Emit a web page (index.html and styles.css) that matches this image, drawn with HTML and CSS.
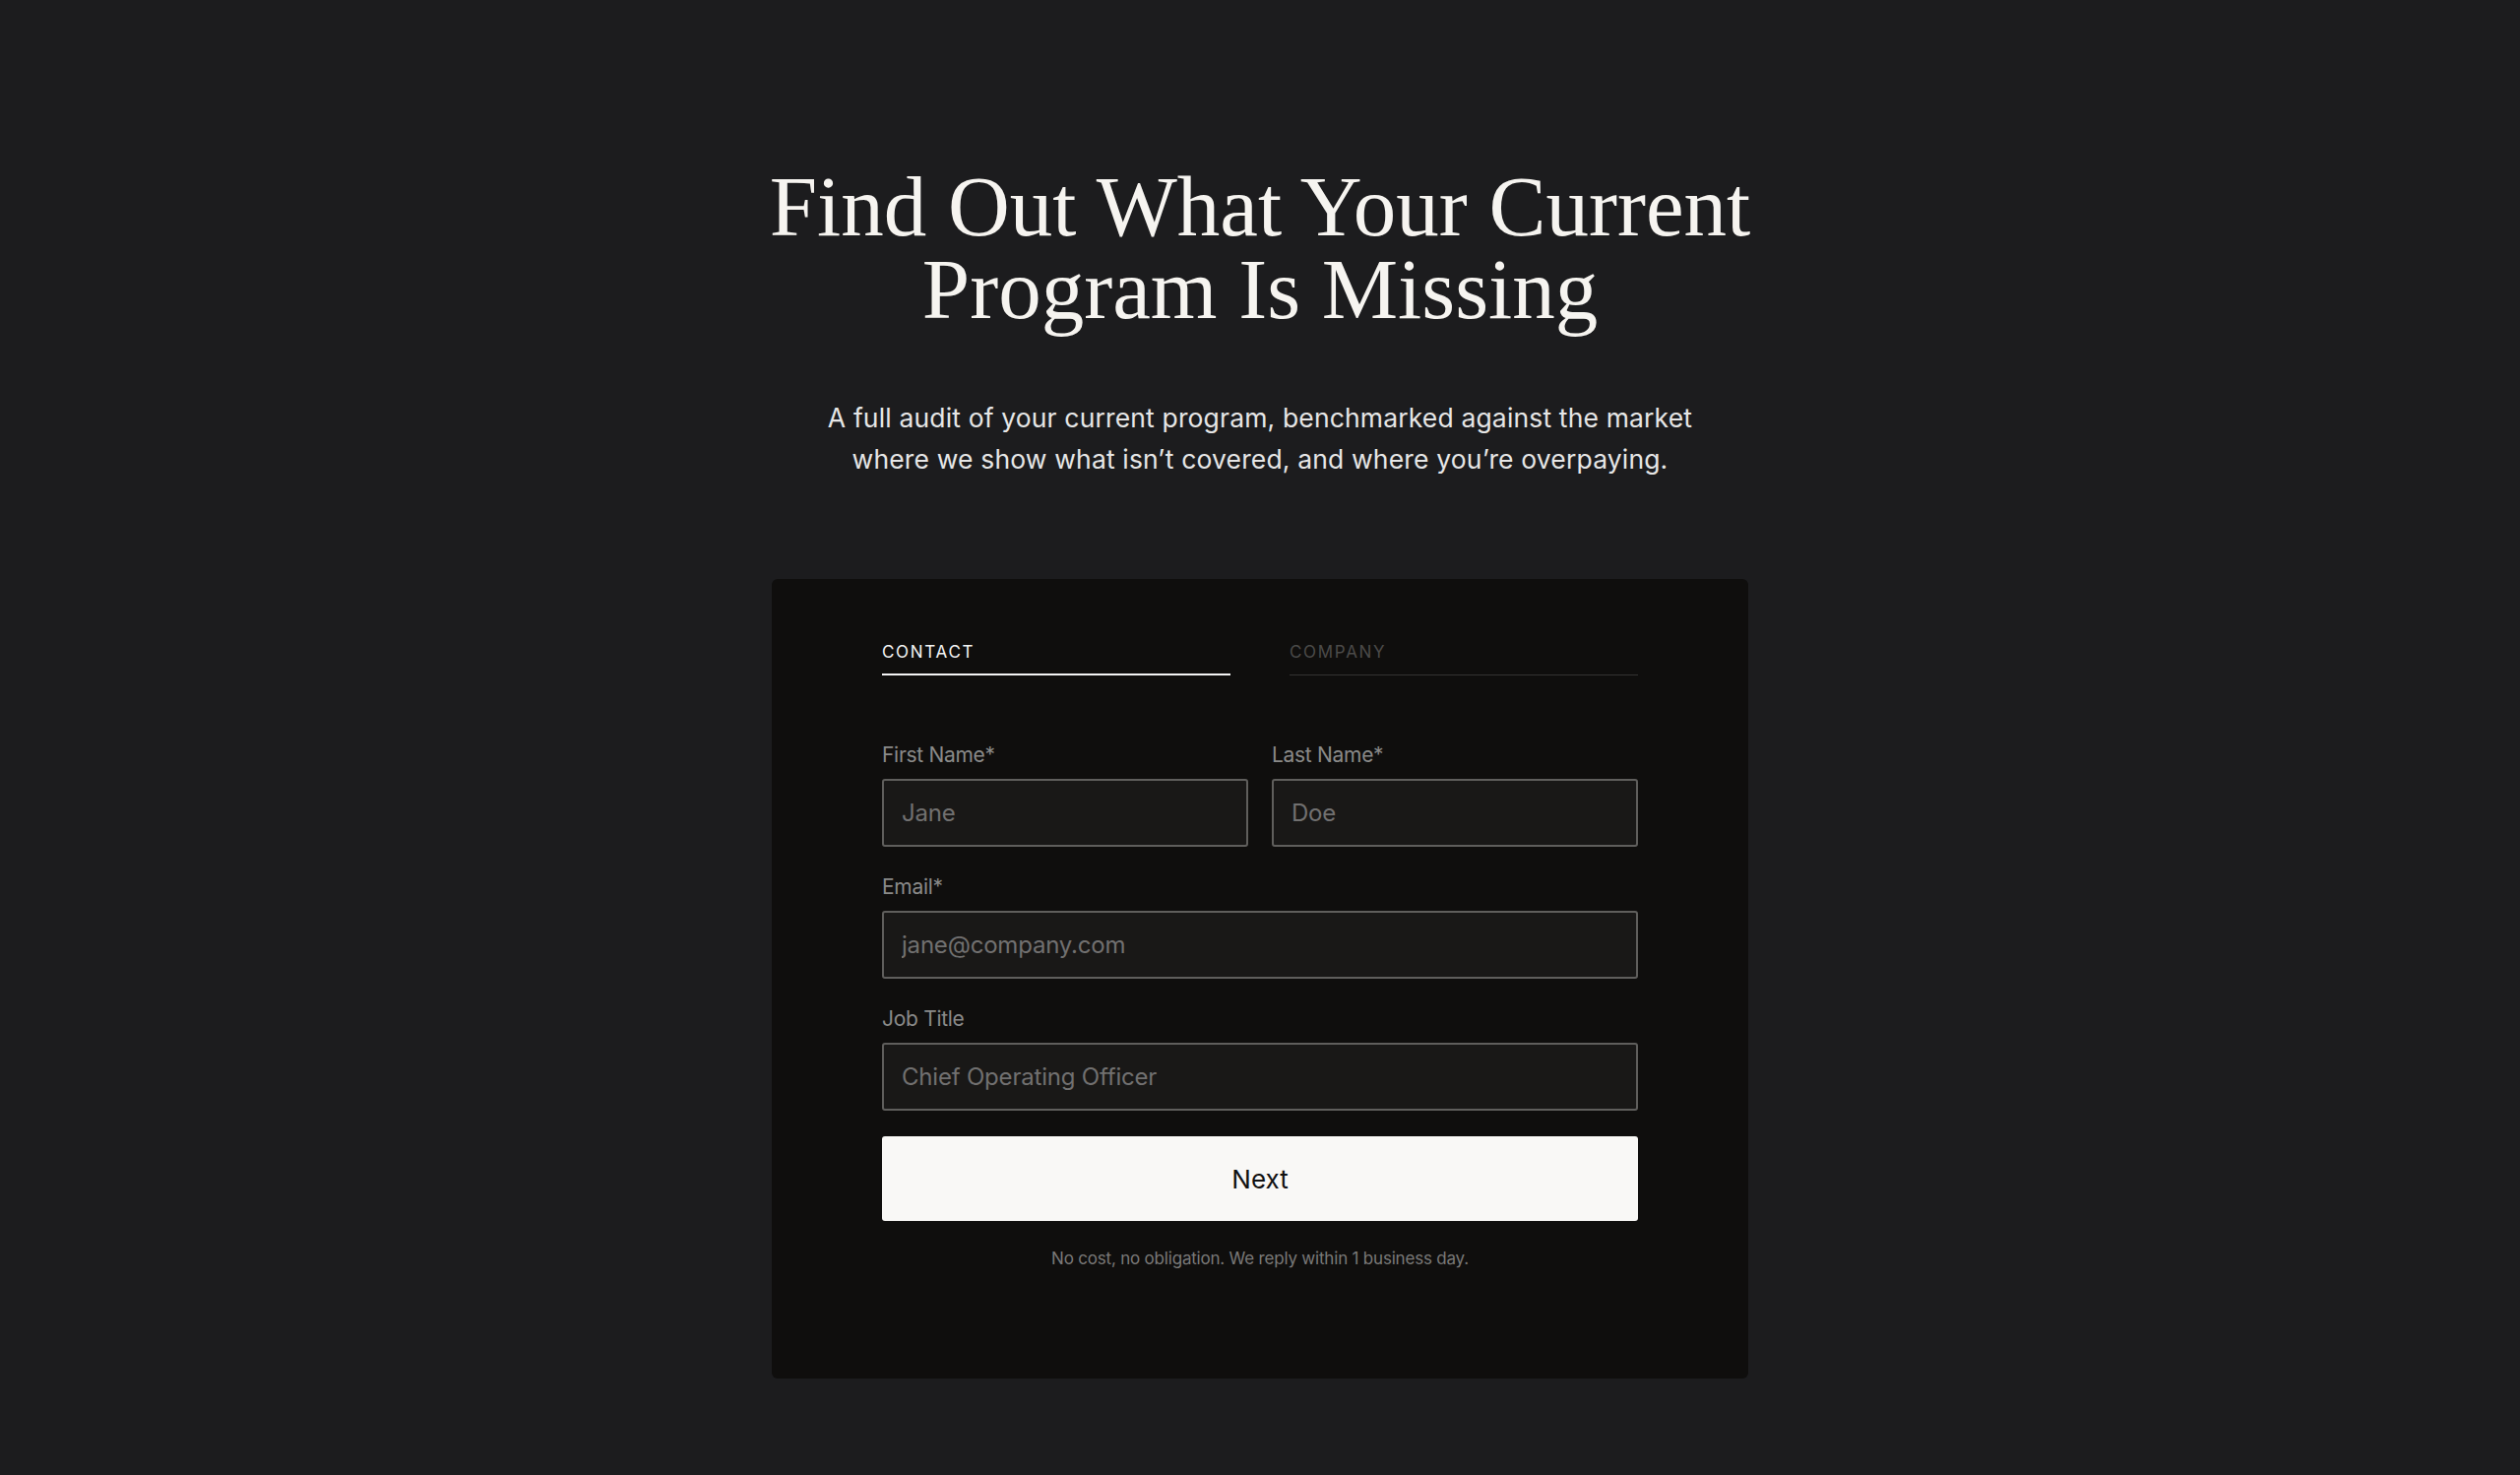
FILE: index.html
```html
<!DOCTYPE html>
<html lang="en">
<head>
<meta charset="utf-8">
<title>Find Out What Your Current Program Is Missing</title>
<link rel="stylesheet" href="styles.css">
</head>
<body>
<main class="page">
  <h1 class="title">Find Out What Your Current<br>Program Is Missing</h1>
  <p class="lede">A full audit of your current program, benchmarked against the market<br>where we show what isn’t covered, and where you’re overpaying.</p>

  <section class="card">
    <div class="tabs">
      <div class="tab tab-active">CONTACT</div>
      <div class="tab">COMPANY</div>
    </div>

    <form class="form">
      <div class="row-2">
        <label class="field">
          <span class="label">First Name*</span>
          <input class="input" type="text" placeholder="Jane">
        </label>
        <label class="field">
          <span class="label">Last Name*</span>
          <input class="input" type="text" placeholder="Doe">
        </label>
      </div>
      <label class="field">
        <span class="label">Email*</span>
        <input class="input" type="email" placeholder="jane@company.com">
      </label>
      <label class="field">
        <span class="label">Job Title</span>
        <input class="input" type="text" placeholder="Chief Operating Officer">
      </label>
      <button class="btn" type="button">Next</button>
      <p class="note">No cost, no obligation. We reply within 1 business day.</p>
    </form>
  </section>
</main>
</body>
</html>
```

FILE: styles.css
```css
html, body {
  margin: 0;
  padding: 0;
  background: #1c1c1e;
}

body {
  font-family: Inter, "Noto Sans", "Liberation Sans", sans-serif;
  color: #ececec;
  min-height: 1498px;
}

.page {
  display: flex;
  flex-direction: column;
  align-items: center;
  padding-top: 168px;
}

.title {
  margin: 0;
  font-family: "Liberation Serif", "DejaVu Serif", serif;
  font-weight: 400;
  font-size: 87px;
  line-height: 84px;
  color: #f6f4f0;
  text-align: center;
  letter-spacing: 0;
}

.lede {
  margin: 67px 0 0;
  font-size: 26.5px;
  line-height: 42px;
  color: #e6e6e6;
  text-align: center;
  letter-spacing: 0.15px;
}

.card {
  margin-top: 101px;
  width: 992px;
  box-sizing: border-box;
  padding: 64px 112px 109px;
  background: #0f0e0d;
  border-radius: 6px;
}

.tabs {
  display: grid;
  grid-template-columns: 1fr 1fr;
  column-gap: 60px;
}

.tab {
  font-size: 17px;
  line-height: 20px;
  letter-spacing: 0.1em;
  color: #4b4a49;
  padding-bottom: 13px;
  border-bottom: 1px solid #343331;
}

.tab-active {
  color: #f4f4f4;
  padding-bottom: 12px;
  border-bottom: 2px solid #f4f4f4;
}

.form {
  display: flex;
  flex-direction: column;
  gap: 28px;
  margin-top: 68px;
}

.row-2 {
  display: grid;
  grid-template-columns: 1fr 1fr;
  column-gap: 24px;
}

.field {
  display: flex;
  flex-direction: column;
  gap: 12px;
}

.label {
  font-size: 21px;
  line-height: 25px;
  color: #8a8a89;
  letter-spacing: -0.3px;
}

.input {
  box-sizing: border-box;
  height: 69px;
  width: 100%;
  margin: 0;
  padding: 0 18px;
  background: #191817;
  border: 2px solid #5f5e5c;
  border-radius: 3px;
  font-family: inherit;
  font-size: 24px;
  color: #e0e0e0;
  outline: none;
}

.input::placeholder {
  color: #717070;
  letter-spacing: -0.2px;
}

.btn {
  margin-top: -2px;
  height: 86px;
  width: 100%;
  border: none;
  border-radius: 3px;
  background: #f9f8f6;
  color: #111111;
  font-family: inherit;
  font-size: 26px;
  cursor: pointer;
}

.note {
  margin: -2px 0 0;
  font-size: 17px;
  line-height: 25px;
  color: #7a7978;
  text-align: center;
  letter-spacing: -0.2px;
}
```
